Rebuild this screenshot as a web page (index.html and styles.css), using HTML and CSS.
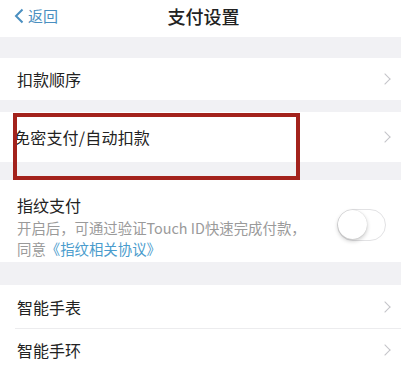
FILE: index.html
```html
<!DOCTYPE html>
<html lang="zh">
<head>
<meta charset="utf-8">
<link rel="stylesheet" href="styles.css">
</head>
<body>
<div class="page">
  <div class="nav">
    <div class="back">
      <svg class="back-icon" width="10" height="16" viewBox="0 0 10 16"><path d="M8.5 1.5 L2 8 L8.5 14.5" fill="none" stroke="#4a8fc0" stroke-width="2"/></svg>
      <span>返回</span>
    </div>
    <div class="title">支付设置</div>
  </div>
  <div class="gap g1"></div>
  <div class="group">
    <div class="row r1"><span class="label">扣款顺序</span><span class="chev"></span></div>
  </div>
  <div class="gap g2"></div>
  <div class="group">
    <div class="row r2"><span class="label tight">免密支付/自动扣款</span><span class="chev"></span>
      <div class="highlight"></div>
    </div>
  </div>
  <div class="gap g3"></div>
  <div class="group">
    <div class="row r3">
      <div class="fp-text">
        <div class="label fp-title">指纹支付</div>
        <div class="sub">开启后，可通过验证Touch ID快速完成付款，</div>
        <div class="sub">同意<span class="link">《指纹相关协议》</span></div>
      </div>
      <div class="toggle"><div class="knob"></div></div>
    </div>
  </div>
  <div class="gap g4"></div>
  <div class="group">
    <div class="row r4"><span class="label">智能手表</span><span class="chev"></span></div>
    <div class="sep"></div>
    <div class="row r5"><span class="label">智能手环</span><span class="chev"></span></div>
  </div>
</div>
</body>
</html>
```
FILE: styles.css
```css
html, body {
  margin: 0;
  padding: 0;
  background: #ffffff;
}
body {
  font-family: "Noto Sans CJK SC", "Noto Sans", sans-serif;
  width: 401px;
  height: 369px;
  overflow: hidden;
}
.page {
  display: flex;
  flex-direction: column;
}
.nav {
  position: relative;
  height: 37px;
  display: flex;
  align-items: center;
  justify-content: center;
  background: #ffffff;
}
.back {
  position: absolute;
  left: 14px;
  top: 7px;
  display: flex;
  align-items: center;
  gap: 4px;
  color: #4a8fc0;
  font-size: 15px;
  line-height: 18px;
}
.back-icon {
  display: block;
}
.title {
  font-size: 18px;
  font-weight: 500;
  color: #222222;
  margin-top: -5px;
  margin-left: 6px;
}
.gap {
  background: #f1f1f4;
}
.g1 { height: 21px; }
.g2 { height: 12px; }
.g3 { height: 18px; }
.g4 { height: 23px; }
.group {
  background: #ffffff;
}
.row {
  position: relative;
  display: flex;
  align-items: center;
  justify-content: space-between;
  padding: 0 14px 0 17px;
}
.r1 { height: 42px; }
.r2 { height: 50px; padding-left: 14px; }
.r3 { height: 82px; align-items: flex-start; }
.r4 { height: 43px; }
.r5 { height: 41px; }
.label {
  font-size: 16px;
  color: #222222;
  line-height: 20px;
}
.tight {
  letter-spacing: 0.2px;
}
.chev {
  width: 7px;
  height: 7px;
  border-right: 1.6px solid #c4c4c8;
  border-top: 1.6px solid #c4c4c8;
  transform: rotate(45deg);
  margin-right: -2px;
}
.highlight {
  position: absolute;
  left: 13px;
  top: 1px;
  width: 279px;
  height: 59px;
  border: 4px solid #a3221c;
  pointer-events: none;
}
.fp-text {
  padding-top: 13px;
}
.fp-title {
  line-height: 24px;
}
.sub {
  font-size: 14.4px;
  color: #9a9a9a;
  line-height: 21px;
  white-space: nowrap;
}
.link {
  color: #4a9ccd;
}
.toggle {
  position: relative;
  width: 47px;
  height: 30px;
  margin-top: 29px;
  margin-right: 1px;
  border-radius: 16px;
  border: 1.5px solid #e2e2e4;
  background: #ffffff;
}
.knob {
  position: absolute;
  left: 0;
  top: 0;
  width: 29px;
  height: 29px;
  border-radius: 50%;
  background: #ffffff;
  box-shadow: 0 2px 4px rgba(0,0,0,0.22), 0 0 1px rgba(0,0,0,0.2);
}
.sep {
  height: 1px;
  background: #ececee;
  margin-left: 15px;
}
```
